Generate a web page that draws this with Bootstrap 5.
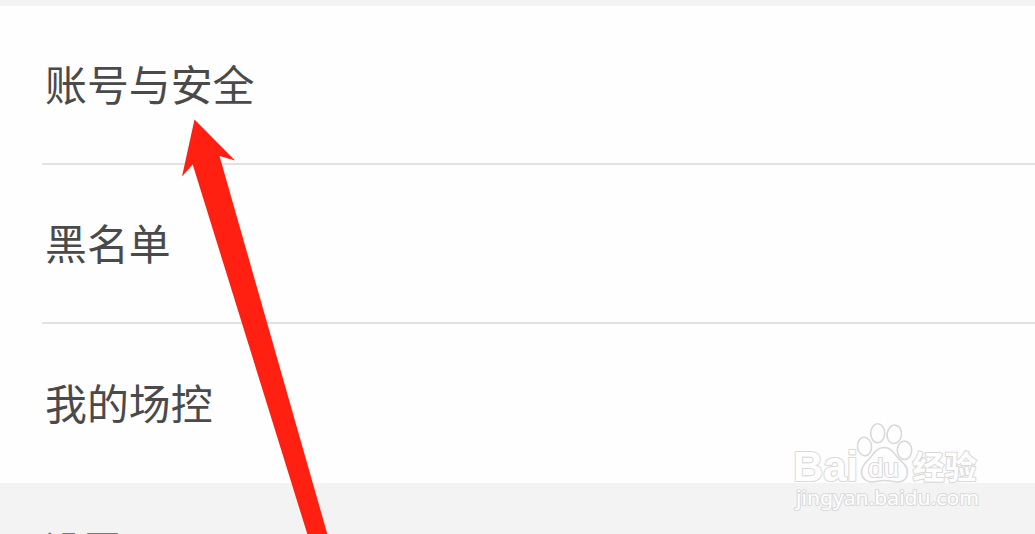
<!DOCTYPE html>
<html lang="zh-CN">
<head>
<meta charset="utf-8">
<meta name="viewport" content="width=device-width, initial-scale=1">
<title>设置</title>
<link href="https://cdn.jsdelivr.net/npm/bootstrap@5.3.0/dist/css/bootstrap.min.css" rel="stylesheet">
<style>
  body { background: #f3f3f3; }
  .screen { height: 534px; padding-top: 6px; color: #4a4a4a; font-family: "Noto Sans CJK SC", sans-serif; font-size: 41.9px; line-height: 60px; }
  .settings { padding-left: 42px; background: #fefefe; }
  .settings .list-group-item { height: 159px; padding: 0 0 4px 3px; background: transparent; color: inherit; border-color: #e2e2e2; border-width: 0 0 2px; }
  .settings .list-group-item:last-child { border-bottom: 0; }
  .section-title { padding: 35px 0 0 43px; color: #777; font-size: 39.5px; }
  .overlay { pointer-events: none; }
  .mark-text { fill: #fff; stroke: #dadada; stroke-width: 2.2px; paint-order: stroke; stroke-linejoin: round; }
</style>
</head>
<body>
<div class="screen position-relative overflow-hidden">
  <ul class="settings list-group list-group-flush rounded-0">
    <li class="list-group-item d-flex align-items-center">账号与安全</li>
    <li class="list-group-item d-flex align-items-center">黑名单</li>
    <li class="list-group-item d-flex align-items-center">我的场控</li>
  </ul>
  <div class="section-title">设置</div>

  <svg class="overlay position-absolute top-0 start-0" width="1035" height="534" viewBox="0 0 1035 534">
    <!-- pointer arrow -->
    <path fill="#ff2012" d="M194.5 119.5 235 160.5 219.5 156 327.3 534H307.3L192.7 164.5 182 176.5Z"/>
    <!-- watermark -->
    <g class="mark-text">
      <text x="793" y="481" font-family="Liberation Sans" font-weight="700" font-size="43" textLength="65" lengthAdjust="spacingAndGlyphs">Bai</text>
      <text x="912.5" y="478.5" font-family="Noto Sans CJK SC" font-weight="700" font-size="32" textLength="64" lengthAdjust="spacingAndGlyphs">经验</text>
      <text x="796" y="505" font-family="Noto Sans" font-size="20.5" textLength="183" lengthAdjust="spacingAndGlyphs">jingyan.baidu.com</text>
    </g>
    <g fill="#fefefe" stroke="#d9d9d9" stroke-width="1.6">
      <ellipse cx="864.5" cy="446.5" rx="7" ry="9.3" transform="rotate(-6 864.5 446.5)"/>
      <ellipse cx="877.7" cy="433.3" rx="7" ry="9.5"/>
      <ellipse cx="894.3" cy="434.3" rx="7.2" ry="9.3" transform="rotate(8 894.3 434.3)"/>
      <ellipse cx="904.5" cy="450.3" rx="7.2" ry="9.2"/>
      <path d="M884 447.5C877 447.5 874 453 870 458 866 462.500 861.5 465.500 861.5 472 861.5 478 866 482 872 482 877 482 879 480.500 884.500 480.500 890 480.500 893 482 898 482 904 482 907.500 478 907.500 472 907.500 465 902 462.500 898 458 893.500 452.500 891 447.500 884 447.500Z"/>
    </g>
    <text class="mark-text" x="868" y="477" font-family="Liberation Sans" font-size="26" textLength="31" lengthAdjust="spacingAndGlyphs">du</text>
  </svg>
</div>
<script src="https://cdn.jsdelivr.net/npm/bootstrap@5.3.0/dist/js/bootstrap.bundle.min.js"></script>
</body>
</html>
